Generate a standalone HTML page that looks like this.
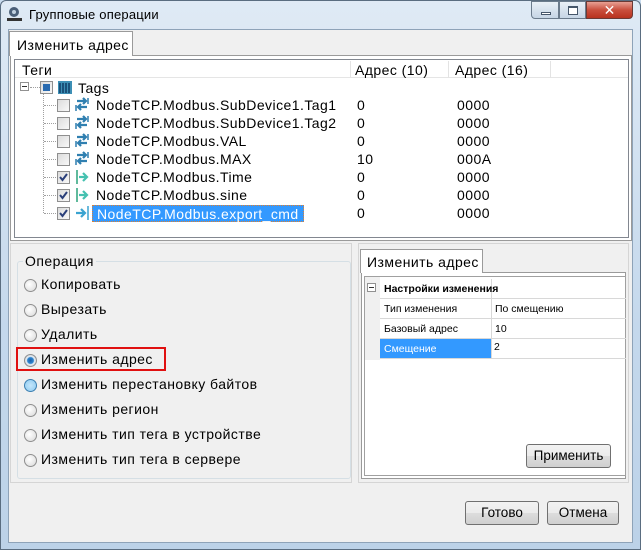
<!DOCTYPE html>
<html><head><meta charset="utf-8"><style>
*{box-sizing:border-box;margin:0;padding:0}
body{width:641px;height:550px;overflow:hidden;position:relative;font-family:"Liberation Sans","DejaVu Sans",sans-serif;font-size:14px;color:#000;background:#c9dcef}
.a{position:absolute}
.frame{left:0;top:0;width:641px;height:550px;background:linear-gradient(#dfeaf5,#c4d8ec 60%,#bcd2e8);border:1px solid #5a6d80;border-radius:6px 6px 0 0}
.client{left:8px;top:29px;width:625px;height:514px;background:#f0f0f0;border:1px solid #8ea3b8}
.t{white-space:nowrap;letter-spacing:0.45px}
.btn{border:1px solid #707070;border-radius:3px;background:linear-gradient(#f2f2f2,#ebebeb 50%,#dddddd 51%,#cfcfcf);text-align:center;line-height:21px;font-size:13.5px}
.cb{width:13px;height:13px;border:1px solid #8f8f8f;background:linear-gradient(135deg,#dcdcdc,#f8f8f8)}
.rb{width:13px;height:13px;border-radius:50%;border:1px solid #8f8f8f;background:radial-gradient(circle at 40% 40%,#fff,#d8d8d8)}
.dot{border-top:1px dotted #a0a0a0}
.ico{width:14px;height:14px}
</style></head><body>
<div class="a frame"></div>
<svg class="a" style="left:6px;top:5px" width="18" height="18"><circle cx="8" cy="7" r="5" fill="#4a5f78"/><circle cx="8" cy="7" r="2" fill="#c0d0e0"/><rect x="1" y="13" width="15" height="3" fill="#333"/></svg>
<div class="a t" style="left:29px;top:7px;font-size:13px;letter-spacing:0.2px">Групповые операции</div>
<div class="a" style="left:531px;top:1px;width:28px;height:18px;border:1px solid #6b7b8c;border-radius:0 0 0 4px;background:linear-gradient(#e9f0f7,#c6d5e5)"><div class="a" style="left:9px;top:10px;width:10px;height:3px;background:#fff;border:1px solid #45566a"></div></div>
<div class="a" style="left:559px;top:1px;width:27px;height:18px;border:1px solid #6b7b8c;background:linear-gradient(#e9f0f7,#c6d5e5)"><div class="a" style="left:8px;top:4px;width:10px;height:9px;border:1px solid #45566a;border-top-width:2px;background:#fff"></div></div>
<div class="a" style="left:586px;top:1px;width:47px;height:18px;border:1px solid #6b3a35;border-radius:0 0 4px 0;background:linear-gradient(#e8a093,#c94f3d 50%,#b8321f);color:#fff;text-align:center;font-weight:bold;font-size:14px;line-height:16px">✕</div>
<div class="a client"></div>
<!-- top tab -->
<div class="a" style="left:10px;top:55px;width:622px;height:186px;border:1px solid #9a9a9a;background:#fff"></div>
<div class="a t" style="left:9px;top:31px;width:124px;height:25px;border:1px solid #9a9a9a;border-bottom:none;background:#fff;padding:5px 0 0 7px">Изменить адрес</div>
<div class="a" style="left:14px;top:59px;width:615px;height:179px;border:1px solid #828790;background:#fff"></div>
<div class="a" style="left:15px;top:60px;width:613px;height:18px;border-bottom:1px solid #e5e5e5"></div>
<div class="a" style="left:350px;top:61px;width:1px;height:17px;background:#e3e3e3"></div>
<div class="a" style="left:448px;top:61px;width:1px;height:17px;background:#e3e3e3"></div>
<div class="a" style="left:550px;top:61px;width:1px;height:17px;background:#e3e3e3"></div>
<div class="a t" style="left:22px;top:62px">Теги</div>
<div class="a t" style="left:355px;top:62px">Адрес (10)</div>
<div class="a t" style="left:455px;top:62px">Адрес (16)</div>
<!-- tree -->
<div class="a" style="left:20px;top:82px;width:9px;height:9px;border:1px solid #919191;background:#fff"><div class="a" style="left:1px;top:3px;width:5px;height:1px;background:#333"></div></div>
<div class="a dot" style="left:30px;top:87px;width:10px"></div>
<div class="a" style="left:43px;top:92px;height:121px;border-left:1px dotted #a0a0a0"></div>
<div class="a cb" style="left:40px;top:81px"><div class="a" style="left:2px;top:2px;width:7px;height:7px;background:#2a6bb0"></div></div>
<svg class="a" style="left:57px;top:79px" width="16" height="16"><rect x="1" y="2" width="14" height="13" fill="#3d8fb5"/><path d="M3 4v10M6 4v10M9 4v10M12 4v10" stroke="#0e3d66" stroke-width="1.5"/></svg>
<div class="a t" style="left:78px;top:80px">Tags</div>
<div id="rows"></div>
<!-- bottom left -->
<div class="a" style="left:10px;top:243px;width:342px;height:240px;border:1px solid #d5d5d5;background:#f0f0f0"></div>
<div class="a" style="left:17px;top:261px;width:334px;height:218px;border:1px solid #d5dfe5;border-radius:3px"></div>
<div class="a t" style="left:23px;top:253px;background:#f0f0f0;padding:0 2px">Операция</div>
<div class="a" style="left:16px;top:347px;width:150px;height:24px;border:2px solid #e01010"></div>
<!-- right -->
<div class="a" style="left:358px;top:243px;width:271px;height:240px;border:1px solid #d5d5d5"></div>
<div class="a" style="left:361px;top:272px;width:265px;height:207px;border:1px solid #9a9a9a;background:#fff"></div>
<div class="a t" style="left:360px;top:249px;width:123px;height:24px;border:1px solid #9a9a9a;border-bottom:none;background:#fff;padding:4px 0 0 6px">Изменить адрес</div>
<div class="a" style="left:364px;top:276px;width:262px;height:200px;border:1px solid #a0a0a0;background:#fff"></div>
<div class="a" style="left:365px;top:277px;width:15px;height:83px;background:#f0f0f0"></div>
<div class="a" style="left:367px;top:283px;width:9px;height:9px;border:1px solid #919191;background:#fff"><div class="a" style="left:1px;top:3px;width:5px;height:1px;background:#333"></div></div>
<div style="font-size:10.5px">
<div class="a" style="left:380px;top:279px;width:246px;height:20px;border-bottom:1px solid #d8d8d8"></div>
<div class="a" style="left:380px;top:299px;width:246px;height:20px;border-bottom:1px solid #d8d8d8"></div>
<div class="a" style="left:380px;top:319px;width:246px;height:20px;border-bottom:1px solid #d8d8d8"></div>
<div class="a" style="left:380px;top:339px;width:112px;height:20px;background:#3399ff"></div>
<div class="a" style="left:380px;top:339px;width:246px;height:20px;border-bottom:1px solid #d8d8d8"></div>
<div class="a" style="left:491px;top:279px;width:1px;height:80px;background:#d8d8d8"></div>
<div class="a" style="left:384px;top:283px;font-weight:bold">Настройки изменения</div>
<div class="a" style="left:384px;top:303px">Тип изменения</div>
<div class="a" style="left:495px;top:303px">По смещению</div>
<div class="a" style="left:384px;top:323px">Базовый адрес</div>
<div class="a" style="left:495px;top:323px">10</div>
<div class="a" style="left:384px;top:343px;color:#fff">Смещение</div>
<div class="a" style="left:494px;top:341px">2</div>
</div>
<div class="a btn" style="left:526px;top:444px;width:85px;height:24px">Применить</div>
<div class="a btn" style="left:465px;top:501px;width:74px;height:24px">Готово</div>
<div class="a btn" style="left:547px;top:501px;width:72px;height:24px">Отмена</div>
<div id="radios"></div>
<script>
var R=[["NodeTCP.Modbus.SubDevice1.Tag1","0","0000",0,0],["NodeTCP.Modbus.SubDevice1.Tag2","0","0000",0,0],["NodeTCP.Modbus.VAL","0","0000",0,0],["NodeTCP.Modbus.MAX","10","000A",0,0],["NodeTCP.Modbus.Time","0","0000",1,1],["NodeTCP.Modbus.sine","0","0000",1,1],["NodeTCP.Modbus.export_cmd","0","0000",1,2]];
var h="";
R.forEach(function(r,i){var y=105+i*18;
h+='<div class="a dot" style="left:44px;top:'+y+'px;width:12px"></div>';
h+='<div class="a cb" style="left:57px;top:'+(y-6)+'px">'+(r[3]?'<svg width="11" height="11" style="position:absolute;left:0;top:0"><path d="M2 5l2.5 3L9 2" stroke="#2a3f7a" stroke-width="2" fill="none"/></svg>':'')+'</div>';
var ic=r[4]==0?'<path d="M2 4h9M8 1l3 3-3 3M12 10H3M6 7l-3 3 3 3" stroke="#2f7fb0" stroke-width="2.2" fill="none"/><path d="M13 1v6M1 8v6" stroke="#2f7fb0" stroke-width="1.5"/>':r[4]==1?'<path d="M2 1v14" stroke="#2aa37a" stroke-width="1.5"/><path d="M4 8h7M8 4l4 4-4 4" stroke="#45c1b0" stroke-width="2.2" fill="none"/>':'<path d="M1 8h9M6 4l4 4-4 4" stroke="#3aa3d0" stroke-width="2.2" fill="none"/><path d="M13 1v14" stroke="#3aa3d0" stroke-width="1.5"/>';
h+='<svg class="a" style="left:75px;top:'+(y-8)+'px" width="16" height="16">'+ic+'</svg>';
var sel=r[4]==2;
h+='<div class="a t" style="left:'+(sel?92:96)+'px;top:'+(y-8)+'px;'+(sel?'background:#3399ff;color:#fff;padding:0 4px;height:17px;border:1px dotted #e08030':'')+'">'+r[0]+'</div>';
h+='<div class="a t" style="left:357px;top:'+(y-8)+'px">'+r[1]+'</div><div class="a t" style="left:457px;top:'+(y-8)+'px">'+r[2]+'</div>';});
document.getElementById("rows").innerHTML=h;
var O=["Копировать","Вырезать","Удалить","Изменить адрес","Изменить перестановку байтов","Изменить регион","Изменить тип тега в устройстве","Изменить тип тега в сервере"];
h="";O.forEach(function(o,i){var y=285+i*25;
var st=i==3?'background:radial-gradient(circle,#1b5fa8 0,#2f86d0 3px,#e8eef4 4px,#c8d0d8 6px)':i==4?'background:radial-gradient(circle,#c4e6fb,#8dcaf0);border-color:#3c7fb1':'';
h+='<div class="a rb" style="left:24px;top:'+(y-6)+'px;'+st+'"></div><div class="a t" style="left:41px;top:'+(y-9)+'px">'+o+'</div>';});
document.getElementById("radios").innerHTML=h;
</script>
</body></html>
